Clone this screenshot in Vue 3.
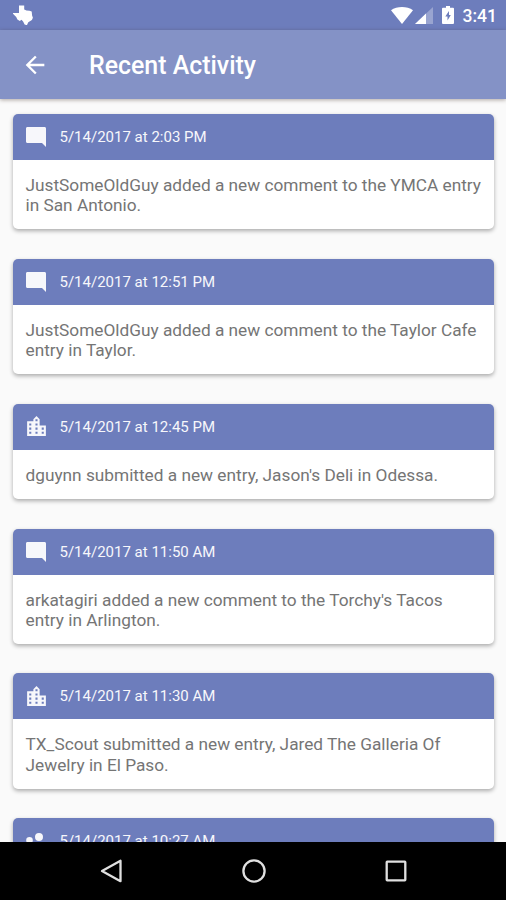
<template>
  <div class="screen">
    <header class="status-bar">
      <svg class="texas-icon" viewBox="0 0 20 20" aria-hidden="true">
        <path d="M6 .5h5.200v4l2.300 1 3 .2 2.200.8.4 4 .8 2.300-1 2.200-3.600 2.300-1.200 2.500 0 .5-2.500-.8-1.500-3-1.600-1.800-1.700 1.300-2.400-1.500-1.200-2.500L0 8.800V7.900h6z" />
      </svg>
      <div class="status-right">
        <svg class="wifi-icon" viewBox="0 0 22 17" aria-hidden="true">
          <path d="M11 17 0 3.300C3 1.100 7 0 11 0s8 1.100 11 3.300z" />
        </svg>
        <svg class="signal-icon" viewBox="0 0 18 17" aria-hidden="true">
          <path class="faint" d="M0 17 18 0v17z" />
          <path d="M0 17 11 6.600V17z" />
        </svg>
        <svg class="battery-icon" viewBox="0 0 12 18" aria-hidden="true">
          <path
            fill-rule="evenodd"
            d="M4 0h4v1.800h3q1 0 1 1V17q0 1-1 1H1q-1 0-1-1V2.800q0-1 1-1h3zM7 5 3.300 10.500h2.200v4L8.800 9H7z"
          />
        </svg>
        <span class="clock">3:41</span>
      </div>
    </header>

    <div class="toolbar">
      <button class="back-button" type="button" aria-label="Back">
        <svg viewBox="0 0 24 24" aria-hidden="true">
          <path d="M20 11H7.830l5.590-5.590L12 4l-8 8 8 8 1.410-1.410L7.830 13H20v-2z" />
        </svg>
      </button>
      <h1 class="title">Recent Activity</h1>
    </div>

    <main class="feed">
      <article v-for="item in activity" :key="item.time" class="card">
        <div class="card-header">
          <svg class="card-icon" :class="`card-icon--${item.type}`" viewBox="0 0 24 24" aria-hidden="true">
            <path :d="ICONS[item.type]" />
          </svg>
          <span class="card-date">{{ item.time }}</span>
        </div>
        <p class="card-text">{{ item.text }}</p>
      </article>
    </main>

    <nav class="nav-bar">
      <svg viewBox="0 0 24 24" aria-hidden="true">
        <path d="M20.500 1.800v20.400L2 12z" />
      </svg>
      <svg viewBox="0 0 24 24" aria-hidden="true">
        <circle cx="12" cy="12" r="10.600" />
      </svg>
      <svg viewBox="0 0 24 24" aria-hidden="true">
        <rect x="2.700" y="2.700" width="18.600" height="18.600" rx="0.500" />
      </svg>
    </nav>
  </div>
</template>

<script setup>
const ICONS = {
  comment: "M22 3.500c0-.9-.6-1.500-1.500-1.500h-17C2.600 2 2 2.600 2 3.500v13c0 .9.600 1.500 1.500 1.500H18l4 4z",
  city: "M15 11V5l-3-3-3 3v2H3v14h18V11h-6zm-8 8H5v-2h2v2zm0-4H5v-2h2v2zm0-4H5V9h2v2zm6 8h-2v-2h2v2zm0-4h-2v-2h2v2zm0-4h-2V9h2v2zm0-4h-2V5h2v2zm6 12h-2v-2h2v2zm0-4h-2v-2h2v2z",
  people: "M15 12a4 4 0 1 0 0-8 4 4 0 0 0 0 8zM5.500 14.500a3.300 3.300 0 1 0 0-6.600 3.300 3.300 0 0 0 0 6.600zM15 14c-2.670 0-8 1.340-8 4v2h16v-2c0-2.660-5.330-4-8-4z",
};

const activity = [
  {
    type: "comment",
    time: "5/14/2017 at 2:03 PM",
    text: "JustSomeOldGuy added a new comment to the YMCA entry in San Antonio.",
  },
  {
    type: "comment",
    time: "5/14/2017 at 12:51 PM",
    text: "JustSomeOldGuy added a new comment to the Taylor Cafe entry in Taylor.",
  },
  {
    type: "city",
    time: "5/14/2017 at 12:45 PM",
    text: "dguynn submitted a new entry, Jason's Deli in Odessa.",
  },
  {
    type: "comment",
    time: "5/14/2017 at 11:50 AM",
    text: "arkatagiri added a new comment to the Torchy's Tacos entry in Arlington.",
  },
  {
    type: "city",
    time: "5/14/2017 at 11:30 AM",
    text: "TX_Scout submitted a new entry, Jared The Galleria Of Jewelry in El Paso.",
  },
  {
    type: "people",
    time: "5/14/2017 at 10:27 AM",
    text: "",
  },
];
</script>

<style>
body {
  margin: 0;
  overflow: hidden;
}
</style>

<style scoped>
.screen {
  display: flex;
  flex-direction: column;
  width: 100%;
  height: 100vh;
  overflow: hidden;
  background: #fafafa;
  font-family: Roboto, "Liberation Sans", sans-serif;
}

.status-bar {
  display: flex;
  align-items: center;
  justify-content: space-between;
  flex: 0 0 30px;
  box-sizing: border-box;
  padding: 0 9px 0 13px;
  background: #6d7dbc;
  color: #fff;
}

.status-bar svg {
  fill: #fff;
}

.texas-icon {
  width: 20px;
  height: 20px;
}

.status-right {
  display: flex;
  align-items: center;
}

.wifi-icon {
  width: 22px;
  height: 17px;
}

.signal-icon {
  width: 18px;
  height: 17px;
  margin-left: 2px;
}

.signal-icon .faint {
  opacity: 0.3;
}

.battery-icon {
  width: 12px;
  height: 18px;
  margin-left: 9px;
}

.clock {
  margin-left: 9px;
  padding-top: 2px;
  font-size: 17.5px;
  font-weight: 500;
  line-height: 28px;
}

.toolbar {
  position: relative;
  z-index: 1;
  display: flex;
  align-items: center;
  flex: 0 0 69px;
  box-sizing: border-box;
  padding: 1px 0 0 21px;
  background: #8492c6;
  box-shadow: 0 1px 4px rgba(60, 40, 30, 0.4);
}

.back-button {
  width: 28px;
  height: 28px;
  padding: 0;
  border: 0;
  background: transparent;
}

.back-button svg {
  display: block;
  fill: #fff;
}

.title {
  margin: 1px 0 0 40px;
  color: #fff;
  font-size: 24.9px;
  font-weight: 500;
  line-height: 32px;
}

.feed {
  display: flex;
  flex-direction: column;
  flex: 1 1 0;
  gap: 29.5px;
  min-height: 0;
  padding: 15px 12px 0 13px;
  overflow: hidden;
}

.card {
  flex: none;
  border-radius: 5px;
  background: #fff;
  box-shadow: 0 2px 4px rgba(0, 0, 0, 0.32);
}

.card-header {
  display: flex;
  align-items: center;
  height: 46px;
  padding-left: 11px;
  border-radius: 5px 5px 0 0;
  background: #6d7dbc;
}

.card-icon {
  width: 24px;
  height: 24px;
  fill: #f7f7fb;
}

.card-icon--city {
  width: 25px;
  height: 25px;
  margin-right: -1px;
}

.card-date {
  margin-left: 11.500px;
  color: #f7f7fb;
  font-size: 15px;
}

.card-text {
  margin: 0;
  padding: 15px 10px 14px 12.500px;
  color: #757575;
  font-size: 17.25px;
  line-height: 20.2px;
}

.nav-bar {
  display: flex;
  align-items: center;
  justify-content: center;
  gap: 118px;
  flex: 0 0 58px;
  box-sizing: border-box;
  padding-left: 2px;
  background: #000;
}

.nav-bar svg {
  width: 24px;
  height: 24px;
  fill: none;
  stroke: #e0e0e0;
  stroke-width: 2.300;
  stroke-linejoin: round;
}
</style>
